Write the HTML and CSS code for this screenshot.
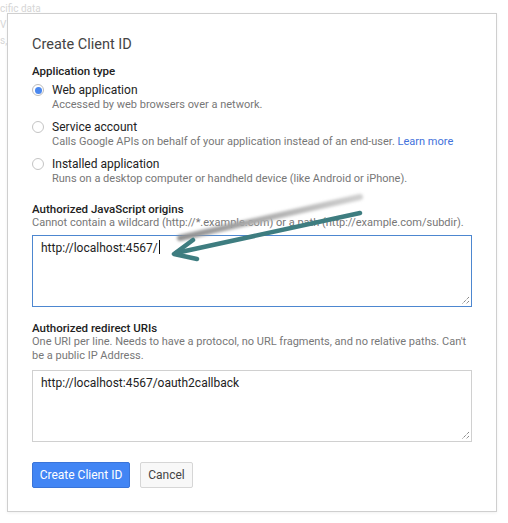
FILE: index.html
```html
<!DOCTYPE html>
<html>
<head>
<meta charset="utf-8">
<link rel="stylesheet" href="styles.css">
</head>
<body>
<div class="backdrop">
  <div class="ghost-line">cific data</div>
  <div class="ghost-line">V</div>
  <div class="ghost-line">s,</div>
</div>

<div class="dialog">
  <h1 class="title">Create Client ID</h1>

  <div class="section-label">Application type</div>

  <div class="options">
    <div class="option">
      <span class="radio checked"></span>
      <div class="option-text">
        <div class="option-label">Web application</div>
        <div class="hint">Accessed by web browsers over a network.</div>
      </div>
    </div>
    <div class="option">
      <span class="radio"></span>
      <div class="option-text">
        <div class="option-label">Service account</div>
        <div class="hint">Calls Google APIs on behalf of your application instead of an end-user. <span class="link">Learn more</span></div>
      </div>
    </div>
    <div class="option">
      <span class="radio"></span>
      <div class="option-text">
        <div class="option-label">Installed application</div>
        <div class="hint">Runs on a desktop computer or handheld device (like Android or iPhone).</div>
      </div>
    </div>
  </div>

  <div class="field field-origins">
    <div class="field-label">Authorized JavaScript origins</div>
    <div class="hint">Cannot contain a wildcard (http://*.example.com) or a path (http://example.com/subdir).</div>
    <div class="textbox focused">http://localhost:4567/<span class="caret"></span>
      <svg class="grip" width="9" height="9" viewBox="0 0 9 9"><path d="M8 1L1 8M8 5L5 8" stroke="#555" stroke-width="1" stroke-dasharray="1 1"/></svg>
    </div>
  </div>

  <div class="field field-redirect">
    <div class="field-label">Authorized redirect URIs</div>
    <div class="hint">One URI per line. Needs to have a protocol, no URL fragments, and no relative paths. Can't be a public IP Address.</div>
    <div class="textbox">http://localhost:4567/oauth2callback
      <svg class="grip" width="9" height="9" viewBox="0 0 9 9"><path d="M8 1L1 8M8 5L5 8" stroke="#555" stroke-width="1" stroke-dasharray="1 1"/></svg>
    </div>
  </div>

  <div class="actions">
    <button class="btn btn-primary">Create Client ID</button>
    <button class="btn btn-secondary">Cancel</button>
  </div>
</div>

<svg class="annotation" width="508" height="523" viewBox="0 0 508 523">
  <defs>
    <filter id="blur" x="-10%" y="-50%" width="120%" height="200%">
      <feGaussianBlur stdDeviation="1.8"/>
    </filter>
    <linearGradient id="shade" x1="360" y1="197" x2="178" y2="238" gradientUnits="userSpaceOnUse">
      <stop offset="0" stop-color="#cfcfcf"/>
      <stop offset="1" stop-color="#8f8f8f"/>
    </linearGradient>
  </defs>
  <path d="M360 197 L180 238" stroke="url(#shade)" stroke-width="6" stroke-linecap="round" filter="url(#blur)" fill="none"/>
  <path d="M360 213 L176 253" stroke="#3e7d80" stroke-width="4.5" stroke-linecap="round" fill="none"/>
  <path d="M193 240 L174 254 L197 259" stroke="#3e7d80" stroke-width="4.5" stroke-linecap="round" stroke-linejoin="round" fill="none"/>
</svg>
</body>
</html>
```

FILE: styles.css
```css
html, body {
  margin: 0;
  padding: 0;
  background: #fff;
  width: 508px;
  height: 523px;
  overflow: hidden;
  font-family: Roboto, "Liberation Sans", Arial, sans-serif;
}

.backdrop {
  padding: 1px 0 0 0;
  color: #d6d6d6;
  font-size: 10px;
  line-height: 16px;
}

.ghost-line {
  white-space: pre;
}

.dialog {
  position: absolute;
  left: 7px;
  top: 13px;
  width: 490px;
  height: 499px;
  box-sizing: border-box;
  background: #fff;
  border: 1px solid #cfcfcf;
  box-shadow: 0 1px 3px rgba(0, 0, 0, 0.06);
  padding: 21px 24px 0 24px;
}

.title {
  margin: 0;
  font-size: 14.5px;
  font-weight: 400;
  line-height: 20px;
  color: #444;
}

.section-label {
  margin-top: 8px;
  font-size: 11.5px;
  font-weight: 500;
  line-height: 16px;
  color: #222;
}

.options {
  margin-top: 3px;
  display: flex;
  flex-direction: column;
  gap: 7px;
}

.option {
  display: flex;
  align-items: flex-start;
  gap: 8px;
}

.radio {
  flex: none;
  width: 12px;
  height: 12px;
  margin-top: 2px;
  border-radius: 50%;
  border: 1px solid #c4c4c4;
  box-sizing: border-box;
  background: #fff;
  position: relative;
}

.radio.checked {
  border-color: #bcbcbc;
}

.radio.checked::after {
  content: "";
  position: absolute;
  left: 1.5px;
  top: 1.5px;
  width: 7px;
  height: 7px;
  border-radius: 50%;
  background: #4a87ee;
}

.option-label {
  font-size: 12px;
  line-height: 16px;
  color: #222;
}

.hint {
  font-size: 11px;
  line-height: 14px;
  color: #777;
}

.link {
  color: #4272db;
}

.field-origins {
  margin-top: 16px;
}

.field-redirect {
  margin-top: 14px;
}

.field-label {
  font-size: 11.5px;
  font-weight: 500;
  line-height: 14px;
  color: #222;
}

.textbox {
  position: relative;
  margin-top: 5px;
  height: 72px;
  box-sizing: border-box;
  border: 1px solid #d0d0d0;
  padding: 4px 8px;
  font-size: 12px;
  line-height: 16px;
  color: #222;
}

.field-redirect .textbox {
  margin-top: 7px;
}

.textbox.focused {
  border-color: #4d87d0;
}

.caret {
  display: inline-block;
  width: 1px;
  height: 14px;
  background: #111;
  vertical-align: -2px;
  margin-left: 1px;
}

.grip {
  position: absolute;
  right: 1px;
  bottom: 1px;
}

.actions {
  margin-top: 20px;
  display: flex;
  gap: 10px;
}

.btn {
  height: 26px;
  box-sizing: border-box;
  border-radius: 2px;
  font-family: Roboto, "Liberation Sans", Arial, sans-serif;
  font-size: 12px;
  padding: 0;
  white-space: nowrap;
  cursor: default;
}

.btn-primary {
  width: 98px;
  background: #4285f4;
  border: 1px solid #3a74d8;
  color: #fff;
}

.btn-secondary {
  width: 53px;
  background: #f8f8f8;
  border: 1px solid #d6d6d6;
  color: #444;
}

.annotation {
  position: absolute;
  left: 0;
  top: 0;
  pointer-events: none;
}
```
